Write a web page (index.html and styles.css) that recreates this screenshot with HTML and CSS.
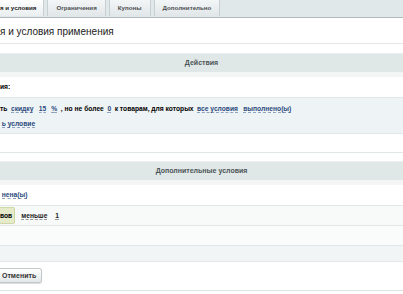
FILE: index.html
```html
<!DOCTYPE html>
<html lang="ru">
<head>
    <meta charset="UTF-8">
    <title>Правила работы с корзиной</title>
    <link rel="stylesheet" href="styles.css">
</head>
<body>
    <div class="tabs">
        <div class="tab active">я и условия</div>
        <div class="tab">Ограничения</div>
        <div class="tab">Купоны</div>
        <div class="tab">Дополнительно</div>
    </div>

    <div class="page">
        <div class="title">я и условия применения</div>

        <div class="head">Действия</div>
        <div class="row plain">
            <b>ия:</b>
        </div>
        <div class="row blue">
            <div class="line">
                <b>ть</b>
                <a class="lnk">скидку</a>
                <a class="lnk">15</a>
                <a class="lnk">%</a>
                <b>, но не более</b>
                <a class="lnk">0</a>
                <b>к товарам, для которых</b>
                <a class="lnk">все условия</a>
                <a class="lnk">выполнено(ы)</a>
            </div>
            <div class="line">
                <a class="lnk">ь условие</a>
            </div>
        </div>
        <div class="row empty"></div>

        <div class="head second">Дополнительные условия</div>
        <div class="row plain">
            <a class="lnk">нена(ы)</a>
        </div>
        <div class="row grey">
            <span class="cond">вов</span>
            <a class="lnk dark">меньше</a>
            <a class="lnk dark">1</a>
        </div>
        <div class="row light"></div>
        <div class="row blue2"></div>

        <div class="buttons">
            <button class="btn">Отменить</button>
        </div>
    </div>
</body>
</html>
```

FILE: styles.css
```css
body {
    margin: 0px;
    padding: 0px;
    background-color: #fff;
    font-family: "Liberation Sans", Arial, sans-serif;
    color: #000;
    overflow: hidden;
}

.tabs {
    display: flex;
    gap: 3px;
    height: 17px;
    background-color: #e1e8ea;
    border-bottom: 1px solid #b3babd;
}

.tab {
    height: 16px;
    line-height: 16px;
    padding: 0 8px;
    font-size: 6.2px;
    font-weight: bold;
    color: #4c4f51;
    background: linear-gradient(#f3f6f7, #e1e6e8);
    border-right: 1px solid #c8cfd2;
    border-left: 1px solid #c8cfd2;
}

.tab.active {
    padding-left: 0px;
    padding-right: 7px;
    border-left: none;
    color: #222;
    background: linear-gradient(#ffffff, #e9eef0);
}

.title {
    height: 25px;
    line-height: 27px;
    font-size: 10px;
    color: #222;
    border-bottom: 1px solid #e3e7e8;
    margin-bottom: 9px;
}

.head {
    height: 18px;
    line-height: 18px;
    text-align: center;
    font-size: 7px;
    font-weight: bold;
    color: #4d5558;
    background-color: #dfe7e7;
    border-bottom: 5px solid #f4f6f6;
    border-top: 1px solid #edf0f0;
}

.head.second {
    margin-top: 8px;
}

.row {
    font-size: 6.7px;
    border-bottom: 1px solid #e2e7e8;
}

.plain {
    height: 20px;
    line-height: 20px;
}

.blue {
    background-color: #eef3f5;
    padding: 3px 0 2px 0;
}

.blue .line {
    height: 15px;
    line-height: 15px;
}

.empty {
    height: 18px;
}

.grey {
    height: 19px;
    display: flex;
    align-items: center;
    gap: 4px;
    background-color: #f8f9f9;
}

.light {
    height: 19px;
    background-color: #fafbfb;
}

.blue2 {
    height: 15px;
    background-color: #f2f5f6;
}

.lnk {
    color: #2a4a7d;
    font-weight: bold;
    border-bottom: 1px dashed #8ea3bd;
    margin: 0 1.7px;
}

.lnk.dark {
    color: #222;
    border-bottom-color: #999;
    margin: 0 2px;
}

.cond {
    display: inline-block;
    height: 15px;
    line-height: 15px;
    padding: 0 2px 0 0;
    font-weight: bold;
    background-color: #e5ebc9;
    border: 1px solid #cfd6a7;
    border-left: none;
    border-radius: 0 2px 2px 0;
}

.buttons {
    display: flex;
    align-items: flex-start;
    height: 22px;
    padding-top: 6px;
    border-bottom: 1px solid #dfe3e4;
}

.btn {
    height: 15px;
    padding: 0 5px 0 2px;
    font-family: "Liberation Sans", Arial, sans-serif;
    font-size: 7px;
    font-weight: bold;
    color: #333;
    background: linear-gradient(#ffffff, #e2e7e8);
    border: 1px solid #c3c9cb;
    border-left: none;
    border-radius: 0 3px 3px 0;
    box-shadow: 0 1px 1px rgba(0, 0, 0, 0.15);
}
```
